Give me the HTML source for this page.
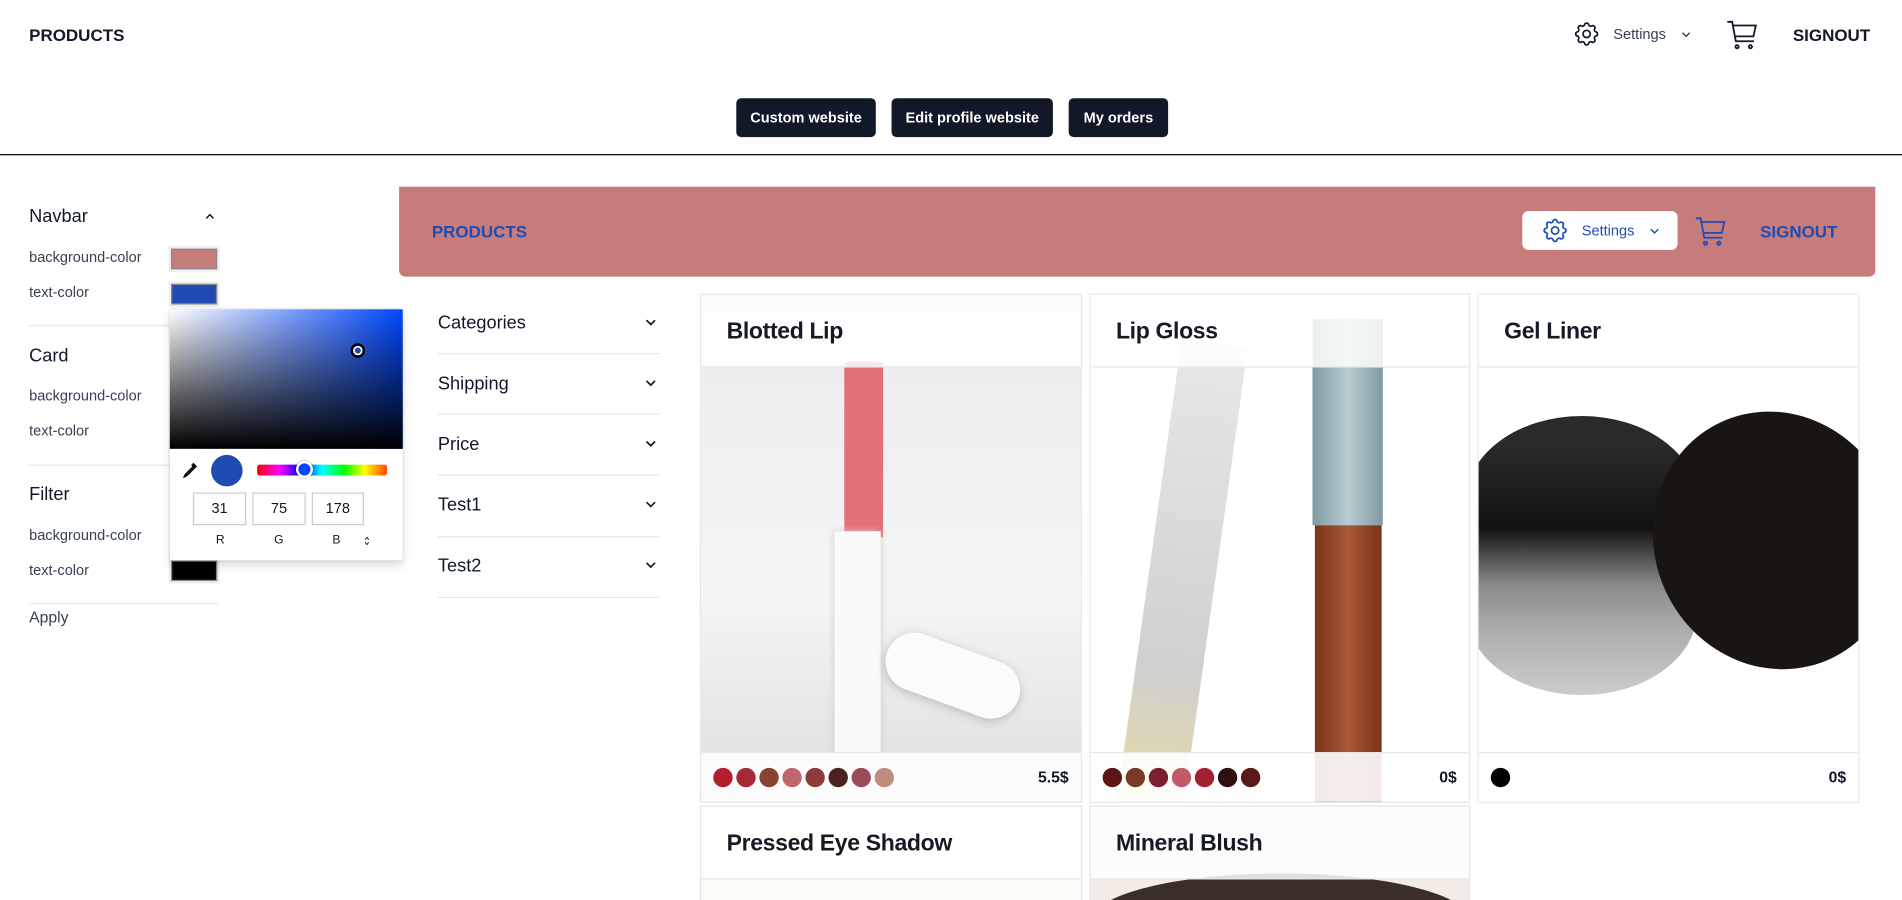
<!DOCTYPE html>
<html><head><meta charset="utf-8"><style>
*{box-sizing:border-box;margin:0;padding:0}
html,body{width:1902px;height:900px;overflow:hidden;background:#fff}
#root{width:1568px;height:742px;overflow:hidden;transform:scale(1.21301);transform-origin:0 0;position:relative;font-family:"Liberation Sans",Arial,sans-serif;color:#111827}
.a{position:absolute}
.b{font-weight:bold}
.btn{position:absolute;top:81px;height:32px;background:#111827;color:#fff;font-size:12px;font-weight:bold;border-radius:4px;line-height:32px;text-align:center}
.lbl{position:absolute;left:24px;font-size:12px;color:#374151}
.h{position:absolute;left:24px;font-size:15px;color:#111827}
.sw{position:absolute;left:139px;width:42px;height:21px;background:#eee;padding:2px}
.sw i{display:block;width:100%;height:100%;border:1px solid #888}
.dv{position:absolute;left:24px;width:156px;height:1px;background:#e5e7eb}
.f{position:absolute;left:361px;width:183px;font-size:15px;color:#111827}
.fl{position:absolute;left:361px;width:183px;height:1px;background:#e5e7eb}
.chev{position:absolute;right:3px;top:5px}
.card{position:absolute;border:1px solid #e5e7eb;overflow:hidden;background:#fff}
.ch{position:absolute;left:0;right:0;top:0;height:60px;border-bottom:1px solid #e5e7eb;background:rgba(255,255,255,.85);font-size:19px;padding:20px 0 0 21px;z-index:2;font-weight:bold;letter-spacing:-0.3px;color:#151a24}
.cf{position:absolute;left:0;right:0;bottom:0;height:41px;border-top:1px solid #e5e7eb;background:rgba(255,255,255,.9);z-index:2}
.dots{position:absolute;left:10px;top:12px;display:flex;gap:3px}
.dots i{width:16px;height:16px;border-radius:50%;display:block}
.pr{position:absolute;right:10px;top:12px;font-size:13px;font-weight:bold}
.inp{position:absolute;top:406px;height:27px;border:1px solid #ccc;font-size:12px;text-align:center;line-height:25px}
</style></head><body><div id="root">
<div class="a b" style="left:24px;top:21px;font-size:14px">PRODUCTS</div>
<svg class="a" style="left:1296px;top:16px" width="24" height="24" viewBox="0 0 24 24" fill="none" stroke="#111827" stroke-width="1.4"><path d="M10.325 4.317c.426-1.756 2.924-1.756 3.35 0a1.724 1.724 0 002.573 1.066c1.543-.94 3.31.826 2.37 2.37a1.724 1.724 0 001.065 2.572c1.756.426 1.756 2.924 0 3.35a1.724 1.724 0 00-1.066 2.573c.94 1.543-.826 3.31-2.37 2.37a1.724 1.724 0 00-2.572 1.065c-.426 1.756-2.924 1.756-3.35 0a1.724 1.724 0 00-2.573-1.066c-1.543.94-3.31-.826-2.37-2.37a1.724 1.724 0 00-1.065-2.572c-1.756-.426-1.756-2.924 0-3.35a1.724 1.724 0 001.066-2.573c-.94-1.543.826-3.31 2.37-2.37.996.608 2.296.07 2.572-1.065z"/><circle cx="12" cy="12" r="3"/></svg>
<div class="a" style="left:1330px;top:21px;font-size:12px;color:#374151">Settings</div>
<svg class="a" style="left:1386px;top:26px" width="8" height="5" viewBox="0 0 8 5" fill="none" stroke="#374151" stroke-width="1.2"><path d="M1 1l3 3 3-3"/></svg>
<svg class="a" style="left:1423px;top:16px" width="28" height="26" viewBox="0 0 28 26" fill="none" stroke="#111827" stroke-width="1.5"><path d="M1 2h4l3 16h15"/><path d="M5.5 5h19l-2 9H7"/><circle cx="9" cy="22.5" r="1.3"/><circle cx="20" cy="22.5" r="1.3"/></svg>
<div class="a b" style="left:1478px;top:21px;font-size:14px">SIGNOUT</div>
<div class="btn" style="left:607px;width:115px">Custom website</div>
<div class="btn" style="left:735px;width:133px">Edit profile website</div>
<div class="btn" style="left:881px;width:82px">My orders</div>
<div class="a" style="left:0;top:127px;width:1568px;height:1px;background:#000"></div>

<div class="h" style="top:170px">Navbar</div>
<svg class="a" style="left:169px;top:176px" width="8" height="5" viewBox="0 0 8 5" fill="none" stroke="#111827" stroke-width="1.2"><path d="M1 4l3-3 3 3"/></svg>
<div class="lbl" style="top:205px">background-color</div><div class="sw" style="top:203px"><i style="background:#c77c7c"></i></div>
<div class="lbl" style="top:234px">text-color</div><div class="sw" style="top:232px"><i style="background:#1f4bb2"></i></div>
<div class="dv" style="top:268px"></div>
<div class="h" style="top:285px">Card</div>
<div class="lbl" style="top:319px">background-color</div>
<div class="lbl" style="top:348px">text-color</div>
<div class="dv" style="top:383px"></div>
<div class="h" style="top:399px">Filter</div>
<div class="lbl" style="top:434px">background-color</div>
<div class="lbl" style="top:463px">text-color</div><div class="sw" style="top:460px"><i style="background:#000"></i></div>
<div class="dv" style="top:497px"></div>
<div class="a" style="left:24px;top:501px;font-size:13px;color:#374151">Apply</div>

<div class="a" style="left:140px;top:255px;width:192px;height:207px;background:#fff;box-shadow:0 0 2px rgba(0,0,0,.3),0 4px 8px rgba(0,0,0,.15)">
 <div class="a" style="left:0;top:0;width:192px;height:115px;background:linear-gradient(to top,#000,rgba(0,0,0,0)),linear-gradient(to right,#fff,#0047ff)"></div>
 <div class="a" style="left:149px;top:28px;width:12px;height:12px;border-radius:50%;border:2px solid #000;box-shadow:inset 0 0 0 1.5px #fff;background:#1f4bb2"></div>
 <svg class="a" style="left:10px;top:125px" width="14" height="14" viewBox="0 0 14 14" fill="none" stroke="#000" stroke-width="1.3"><path d="M9 2l3 3M8 3l3 3M10 4L3 11l-1 2 2-1 7-7"/></svg>
 <div class="a" style="left:34px;top:120px;width:26px;height:26px;border-radius:50%;background:#1f4bb2"></div>
 <div class="a" style="left:72px;top:128px;width:107px;height:9px;border-radius:2px;background:linear-gradient(to right,#f00,#f0f 17%,#00f 33%,#0ff 50%,#0f0 67%,#ff0 83%,#f40)"></div>
 <div class="a" style="left:104px;top:125px;width:14px;height:14px;border-radius:50%;background:#0047ff;border:2px solid #fff;box-shadow:0 0 2px rgba(0,0,0,.4)"></div>
</div>
<div class="inp" style="left:159px;width:44px">31</div>
<div class="inp" style="left:208px;width:44px">75</div>
<div class="inp" style="left:257px;width:43px">178</div>
<div class="a" style="left:178px;top:440px;font-size:10px">R</div>
<div class="a" style="left:226px;top:440px;font-size:10px">G</div>
<div class="a" style="left:274px;top:440px;font-size:10px">B</div>
<svg class="a" style="left:300px;top:442px" width="5" height="8" viewBox="0 0 5 8" fill="none" stroke="#333" stroke-width="0.9"><path d="M1 3l1.5-2 1.5 2M1 5l1.5 2 1.5-2"/></svg>

<div class="a" style="left:329px;top:154px;width:1217px;height:74px;background:#c77c7c;border-radius:0 0 5px 5px"></div>
<div class="a b" style="left:356px;top:183px;font-size:14px;color:#1f4bb2">PRODUCTS</div>
<div class="a" style="left:1255px;top:174px;width:128px;height:32px;background:#fff;border-radius:5px"></div>
<svg class="a" style="left:1270px;top:178px" width="24" height="24" viewBox="0 0 24 24" fill="none" stroke="#1f4bb2" stroke-width="1.4"><path d="M10.325 4.317c.426-1.756 2.924-1.756 3.35 0a1.724 1.724 0 002.573 1.066c1.543-.94 3.31.826 2.37 2.37a1.724 1.724 0 001.065 2.572c1.756.426 1.756 2.924 0 3.35a1.724 1.724 0 00-1.066 2.573c.94 1.543-.826 3.31-2.37 2.37a1.724 1.724 0 00-2.572 1.065c-.426 1.756-2.924 1.756-3.35 0a1.724 1.724 0 00-2.573-1.066c-1.543.94-3.31-.826-2.37-2.37a1.724 1.724 0 00-1.065-2.572c-1.756-.426-1.756-2.924 0-3.35a1.724 1.724 0 001.066-2.573c-.94-1.543.826-3.31 2.37-2.37.996.608 2.296.07 2.572-1.065z"/><circle cx="12" cy="12" r="3"/></svg>
<div class="a" style="left:1304px;top:183px;font-size:12px;color:#1f4bb2">Settings</div>
<svg class="a" style="left:1360px;top:188px" width="8" height="5" viewBox="0 0 8 5" fill="none" stroke="#1f4bb2" stroke-width="1.2"><path d="M1 1l3 3 3-3"/></svg>
<svg class="a" style="left:1397px;top:178px" width="28" height="26" viewBox="0 0 28 26" fill="none" stroke="#1f4bb2" stroke-width="1.5"><path d="M1 2h4l3 16h15"/><path d="M5.5 5h19l-2 9H7"/><circle cx="9" cy="22.5" r="1.3"/><circle cx="20" cy="22.5" r="1.3"/></svg>
<div class="a b" style="left:1451px;top:183px;font-size:14px;color:#1f4bb2">SIGNOUT</div>

<div class="f" style="top:258px">Categories<svg class="chev" width="9" height="6" viewBox="0 0 9 6" fill="none" stroke="#111827" stroke-width="1.4"><path d="M1 1l3.5 3.5L8 1"/></svg></div><div class="fl" style="top:291px"></div>
<div class="f" style="top:308px">Shipping<svg class="chev" width="9" height="6" viewBox="0 0 9 6" fill="none" stroke="#111827" stroke-width="1.4"><path d="M1 1l3.5 3.5L8 1"/></svg></div><div class="fl" style="top:341px"></div>
<div class="f" style="top:358px">Price<svg class="chev" width="9" height="6" viewBox="0 0 9 6" fill="none" stroke="#111827" stroke-width="1.4"><path d="M1 1l3.5 3.5L8 1"/></svg></div><div class="fl" style="top:391px"></div>
<div class="f" style="top:408px">Test1<svg class="chev" width="9" height="6" viewBox="0 0 9 6" fill="none" stroke="#111827" stroke-width="1.4"><path d="M1 1l3.5 3.5L8 1"/></svg></div><div class="fl" style="top:442px"></div>
<div class="f" style="top:458px">Test2<svg class="chev" width="9" height="6" viewBox="0 0 9 6" fill="none" stroke="#111827" stroke-width="1.4"><path d="M1 1l3.5 3.5L8 1"/></svg></div><div class="fl" style="top:492px"></div>

<div class="card" style="left:577px;top:242px;width:315px;height:420px;background:linear-gradient(to bottom,#ececec,#f5f5f5 60%,#ddd)">
 <div class="a" style="left:118px;top:55px;width:32px;height:145px;background:#e0707a;border-radius:4px 4px 0 0"></div>
 <div class="a" style="left:110px;top:195px;width:38px;height:185px;background:#fafafa;box-shadow:0 0 6px #ccc"></div>
 <div class="a" style="left:150px;top:290px;width:115px;height:48px;background:#fbfbfb;border-radius:24px;transform:rotate(20deg);box-shadow:0 2px 8px #bbb"></div>
 <div class="ch">Blotted Lip</div>
 <div class="cf"><div class="dots"><i style="background:#b31f2a"></i><i style="background:#a52a35"></i><i style="background:#8a4234"></i><i style="background:#c0646d"></i><i style="background:#8e3c3a"></i><i style="background:#4a2220"></i><i style="background:#9a4a58"></i><i style="background:#bf8d7e"></i></div><div class="pr">5.5$</div></div>
</div>
<div class="card" style="left:898px;top:242px;width:314px;height:420px">
 <div class="a" style="left:75px;top:40px;width:55px;height:390px;background:linear-gradient(to bottom,#e8e8e8,#d0d0d0 70%,#e8dca0);transform:rotate(8deg);transform-origin:top"></div>
 <div class="a" style="left:183px;top:20px;width:58px;height:170px;background:linear-gradient(to right,#7f99a0,#b9cdd2,#7f99a0)"></div>
 <div class="a" style="left:185px;top:190px;width:55px;height:230px;background:linear-gradient(to right,#7a3418,#a85a38,#7a3418)"></div>
 <div class="ch">Lip Gloss</div>
 <div class="cf"><div class="dots"><i style="background:#5c1515"></i><i style="background:#7a3a2a"></i><i style="background:#7a2030"></i><i style="background:#c05a6a"></i><i style="background:#a32030"></i><i style="background:#2e1010"></i><i style="background:#5a1818"></i></div><div class="pr">0$</div></div>
</div>
<div class="card" style="left:1218px;top:242px;width:315px;height:420px">
 <div class="a" style="left:-10px;top:100px;width:190px;height:230px;border-radius:50%/30%;background:linear-gradient(to bottom,#2a2a2a 10%,#111 40%,#888 60%,#aaa 75%,#ccc)"></div>
 <div class="a" style="left:145px;top:95px;width:200px;height:215px;border-radius:50%;background:#181512;transform:rotate(-25deg)"></div>
 <div class="ch">Gel Liner</div>
 <div class="cf"><div class="dots"><i style="background:#000"></i></div><div class="pr">0$</div></div>
</div>
<div class="card" style="left:577px;top:664px;width:315px;height:100px;background:#fdfbf8"><div class="ch">Pressed Eye Shadow</div></div>
<div class="card" style="left:898px;top:664px;width:314px;height:100px;background:#f2ebe6">
 <div class="a" style="left:0;top:55px;width:314px;height:80px;border-radius:50%;background:#3a2d2a"></div>
 <div class="ch">Mineral Blush</div></div>
</div></body></html>
